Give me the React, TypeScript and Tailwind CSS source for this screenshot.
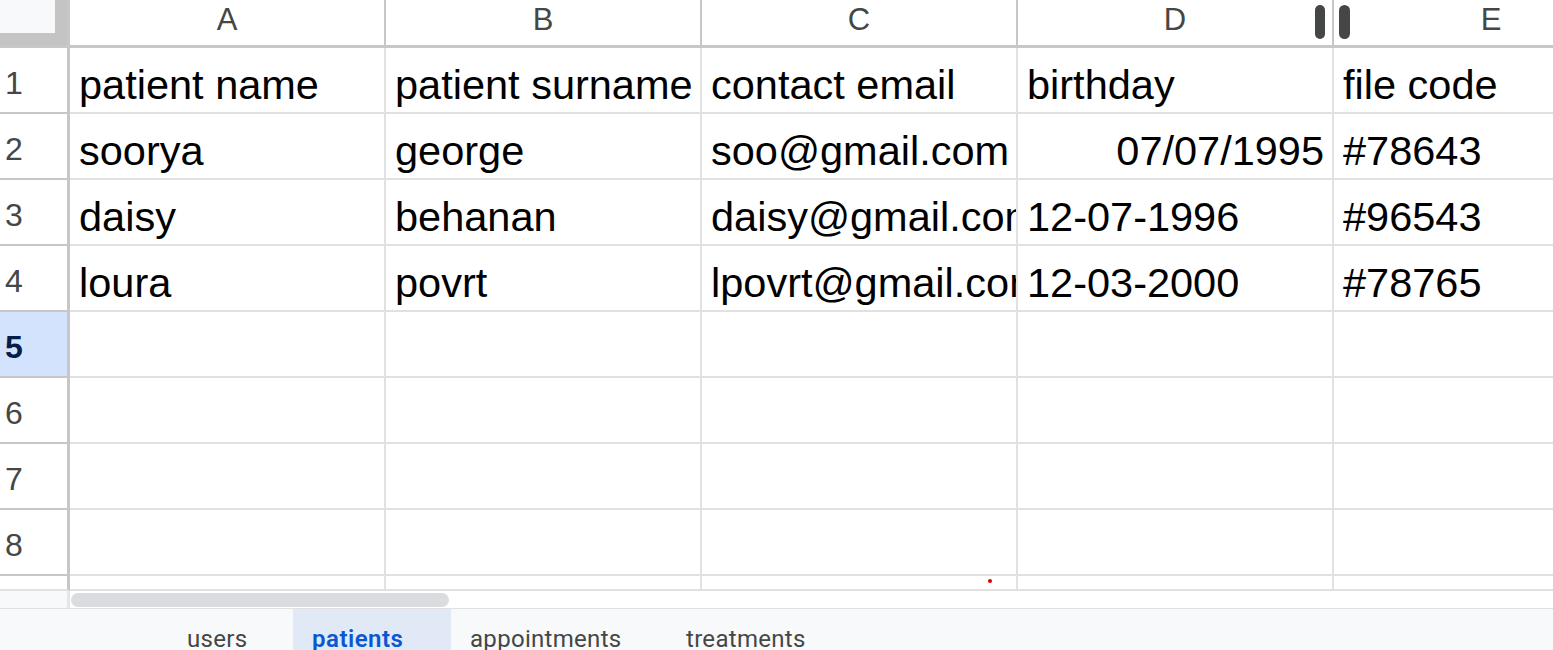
import React from 'react';

type Cell = { text: string; right?: boolean };

const columns = ['A', 'B', 'C', 'D', 'E'];

const rows: Cell[][] = [
    [{ text: 'patient name' }, { text: 'patient surname' }, { text: 'contact email' }, { text: 'birthday' }, { text: 'file code' }],
    [{ text: 'soorya' }, { text: 'george' }, { text: 'soo@gmail.com' }, { text: '07/07/1995', right: true }, { text: '#78643' }],
    [{ text: 'daisy' }, { text: 'behanan' }, { text: 'daisy@gmail.com' }, { text: '12-07-1996' }, { text: '#96543' }],
    [{ text: 'loura' }, { text: 'povrt' }, { text: 'lpovrt@gmail.com' }, { text: '12-03-2000' }, { text: '#78765' }],
    [], [], [], [],
];

const tabs = [
    { name: 'users', width: 'w-[125px]' },
    { name: 'patients', width: 'w-[158px]', active: true },
    { name: 'appointments', width: 'w-[216px]' },
    { name: 'treatments', width: 'w-[160px]' },
];

const SheetRow: React.FC<{ index: number; cells: Cell[]; selected?: boolean }> = ({ index, cells, selected = false }) => (
    <div className="flex h-[66px]">
        <div
            className={`w-[70px] shrink-0 border-r-[3px] border-b-2 border-[#c7c7c7] flex items-center pl-[5px] pt-[6px] text-[32px] leading-none ${selected ? 'bg-[#d3e3fd] text-[#041e49] font-bold' : 'bg-white text-[#444746]'}`}
        >
            {index}
        </div>
        {columns.map((col, i) => {
            const cell = cells[i];
            return (
                <div
                    key={col}
                    className={`w-[316px] shrink-0 border-r-2 border-b-2 border-[#e1e1e1] overflow-hidden whitespace-nowrap flex items-end pb-[7px] text-[41.5px] leading-none text-black ${cell?.right ? 'justify-end pr-[8px]' : 'pl-[9px]'}`}
                >
                    {cell?.text}
                </div>
            );
        })}
    </div>
);

export default function App() {
    return (
        <div className="w-full h-[650px] overflow-hidden bg-white flex flex-col" style={{ fontFamily: '"Liberation Sans", Arial, sans-serif' }}>
            <div className="relative w-[1650px] shrink-0">
                {/* column header */}
                <div className="flex h-[48px] border-b-[3px] border-[#c7c7c7]">
                    <div className="w-[70px] shrink-0 border-r-[3px] border-[#c7c7c7] bg-[#c4c4c4]">
                        <div className="w-[55px] h-[33px] bg-[#f8f9fa]"></div>
                    </div>
                    {columns.map((col) => (
                        <div
                            key={col}
                            className="w-[316px] shrink-0 border-r-2 border-[#c7c7c7] flex items-center justify-center pb-[6px] text-[31px] leading-none text-[#444746]"
                        >
                            {col}
                        </div>
                    ))}
                </div>
                <div className="absolute left-[1315px] top-[5px] flex gap-[14px]">
                    <div className="w-[10px] h-[34px] rounded-full bg-[#444746]"></div>
                    <div className="w-[11px] h-[34px] rounded-full bg-[#444746]"></div>
                </div>

                {rows.map((cells, i) => (
                    <SheetRow key={i} index={i + 1} cells={cells} selected={i === 4} />
                ))}

                {/* partial row 9 */}
                <div className="flex h-[15px]">
                    <div className="w-[70px] shrink-0 border-r-[3px] border-b-2 border-r-[#c7c7c7] border-b-[#e1e1e1] bg-white"></div>
                    {columns.map((col) => (
                        <div key={col} className="w-[316px] shrink-0 border-r-2 border-b-2 border-[#e1e1e1]"></div>
                    ))}
                </div>
                <div className="absolute left-[988px] top-[579px] w-[4px] h-[4px] rounded-full bg-[#e00000]"></div>
            </div>

            {/* horizontal scrollbar */}
            <div className="flex h-[18px] shrink-0 border-b border-[#e0e0e0]">
                <div className="w-[70px] shrink-0 bg-[#f8f9fa] border-r-[3px] border-[#e6e6e6]"></div>
                <div className="ml-[1px] mt-[2px] w-[378px] h-[14px] rounded-full bg-[#dadce0]"></div>
            </div>

            {/* sheet tabs */}
            <div className="flex flex-1 bg-[#f8f9fa] pl-[168px]" style={{ fontFamily: 'Roboto, "Noto Sans", sans-serif' }}>
                {tabs.map((tab) => (
                    <div
                        key={tab.name}
                        className={`${tab.width} shrink-0 pl-[19px] pt-[16px] text-[24px] leading-[28px] whitespace-nowrap ${tab.active ? 'bg-[#e1e9f7] text-[#0b57d0] font-semibold tracking-[0.5px]' : 'text-[#444746] font-normal tracking-[0.3px]'}`}
                    >
                        {tab.name}
                    </div>
                ))}
            </div>
        </div>
    );
}
